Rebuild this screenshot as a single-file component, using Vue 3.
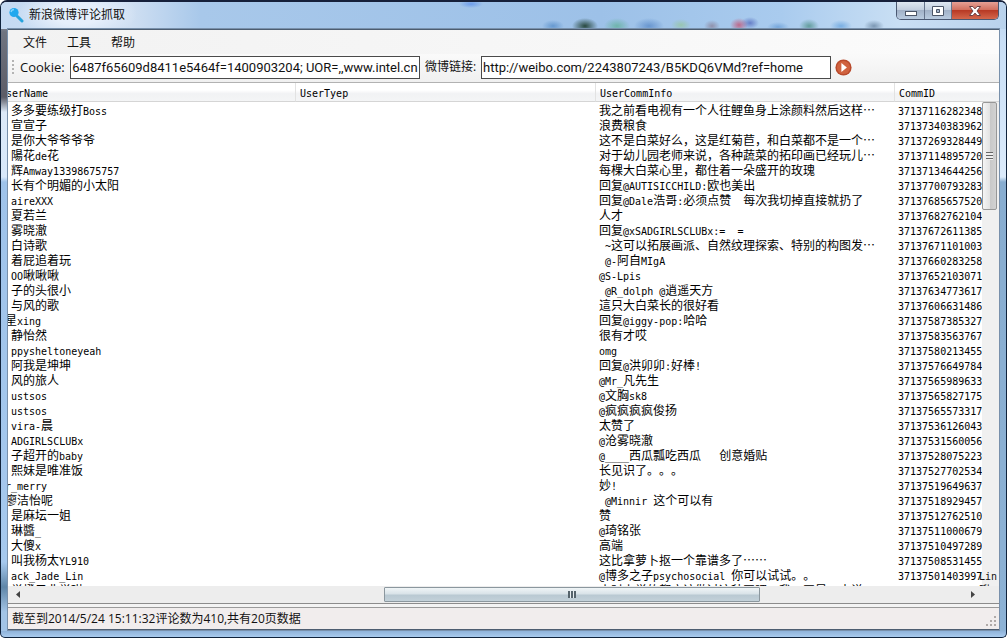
<script setup>
import { onMounted, ref } from 'vue'

const cookie = ref('b6487f65609d8411e5464f=1400903204; UOR=,,www.intel.cn')
const link = ref('http://weibo.com/2243807243/B5KDQ6VMd?ref=home')
const menus = ['文件', '工具', '帮助']

// The cookie box shows the end of its value, where the caret was left.
const cookieBox = ref(null)
onMounted(() => {
  cookieBox.value.scrollLeft = cookieBox.value.scrollWidth
})

const rows = [
  ['多多要练级打Boss', '我之前看电视有一个人往鲤鱼身上涂颜料然后这样…', '37137116282348'],
  ['宣宣子', '浪费粮食', '37137340383962'],
  ['是你大爷爷爷爷', '这不是白菜好么，这是红菊苣，和白菜都不是一个…', '37137269328449'],
  ['陽花de花', '对于幼儿园老师来说，各种蔬菜的拓印画已经玩儿…', '37137114895720'],
  ['辉Amway13398675757', '每棵大白菜心里，都住着一朵盛开的玫瑰', '37137134644256'],
  ['长有个明媚的小太阳', '回复@AUTISICCHILD:欧也美出', '37137700793283'],
  ['aireXXX', '回复@Dale浩哥:必须点赞　每次我切掉直接就扔了', '37137685657520'],
  ['夏若兰', '人才', '37137682762104'],
  ['雾晓澈', '回复@xSADGIRLSCLUBx:=  =', '37137672611385'],
  ['白诗歌', ' ~这可以拓展画派、自然纹理探索、特别的构图发…', '37137671101003'],
  ['着屁追着玩', ' @-阿自MIgA', '37137660283258'],
  ['OO啾啾啾', '@S-Lpis', '37137652103071'],
  ['子的头很小', ' @R_dolph @逍遥天方', '37137634773617'],
  ['与风的歌', '這只大白菜长的很好看', '37137606631486'],
  ['星xing', '回复@iggy-pop:哈哈', '37137587385327', true],
  ['静怡然', '很有才哎', '37137583563767'],
  ['ppysheltoneyeah', 'omg', '37137580213455'],
  ['阿我是坤坤', '回复@洪卯卯:好棒!', '37137576649784'],
  ['风的旅人', '@Mr_凡先生', '37137565989633'],
  ['ustsos', '@文胸sk8', '37137565827175'],
  ['ustsos', '@疯疯疯疯俊扬', '37137565573317'],
  ['vira-晨', '太赞了', '37137536126043'],
  ['ADGIRLSCLUBx', '@沧雾晓澈', '37137531560056'],
  ['子超开的baby', '@____西瓜瓢吃西瓜   创意婚贴', '37137528075223'],
  ['熙妹是唯准饭', '长见识了。。。', '37137527702534'],
  ['r_merry', '妙!', '37137519649637', true],
  ['廖洁怡呢', ' @Minnir 这个可以有', '37137518929457', true],
  ['是麻坛一姐', '赞', '37137512762510'],
  ['琳醬_', '@琦铭张', '37137511000679'],
  ['大傻x', '高端', '37137510497289'],
  ['叫我杨太YL910', '这比拿萝卜抠一个靠谱多了……', '37137508531455'],
  ['ack_Jade_Lin', '@博多之子psychosocial 你可以试试。。', '37137501403997'],
  ['学橙子非学琪', '小时上学的都应该做过这种画吧，我一画是一本说', '']
]

// Latin runs take half the advance of a Chinese glyph, so they are set apart.
const runs = (text) =>
  (text.match(/[\x20-\x7e]+|[^\x20-\x7e]+/g) || []).map((t) => ({ t, latin: /^[\x20-\x7e]/.test(t) }))
</script>

<template>
  <div class="window">
    <header class="titlebar">
      <svg class="app-icon" viewBox="0 0 16 16" aria-hidden="true">
        <path d="M9.5 9.5 14 14" stroke="#27a3dc" stroke-width="3" stroke-linecap="round" />
        <circle cx="6" cy="5.5" r="4.6" fill="#20a8ee" />
        <path d="M3 5a3.2 3.2 0 0 1 3-2.5" stroke="#7fd3fb" stroke-width="1.4" fill="none" />
      </svg>
      <h1>新浪微博评论抓取</h1>
      <div class="caption">
        <button type="button" class="min" aria-label="最小化">
          <svg viewBox="0 0 14 12"><rect x="1.5" y="6.5" width="11" height="4" fill="#fff" stroke="#4c5668" /></svg>
        </button>
        <button type="button" class="max" aria-label="最大化">
          <svg viewBox="0 0 14 12"><path fill-rule="evenodd" d="M1.5 1.5h11v9h-11zM5.5 4.5v3h3v-3z" fill="#fff" stroke="#4c5668" /></svg>
        </button>
        <button type="button" class="close" aria-label="关闭">
          <svg viewBox="0 0 14 12"><path d="M1.5 1.5h3.4L7 3.9l2.1-2.4h3.4L9 6l3.5 4.5H9.1L7 8.1l-2.1 2.4H1.5L5 6z" fill="#fff" stroke="#6b4044" /></svg>
        </button>
      </div>
    </header>

    <main class="client">
      <nav class="menubar">
        <button v-for="m in menus" :key="m" type="button">{{ m }}</button>
      </nav>

      <form class="toolbar" @submit.prevent>
        <span class="grip"></span>
        <label for="cookie">Cookie:</label>
        <input id="cookie" ref="cookieBox" v-model="cookie" type="text" />
        <label for="link">微博链接:</label>
        <input id="link" v-model="link" type="text" />
        <button type="submit" class="go" aria-label="开始">
          <svg viewBox="0 0 16 16">
            <circle cx="8" cy="8" r="7.6" fill="#b94a2c" />
            <circle cx="8" cy="8" r="6.2" fill="#d0623f" />
            <path d="M6 3.8 11.2 8 6 12.2z" fill="#fff" />
          </svg>
        </button>
      </form>

      <section class="list">
        <div class="viewport">
          <table>
            <colgroup><col class="c-name" /><col class="c-type" /><col class="c-info" /><col /></colgroup>
            <thead>
              <tr>
                <th class="cut"><span class="latin">serName</span></th>
                <th><span class="latin">UserTyep</span></th>
                <th><span class="latin">UserCommInfo</span></th>
                <th><span class="latin">CommID</span></th>
              </tr>
            </thead>
            <tbody>
              <tr v-for="(r, i) in rows" :key="i">
                <td :class="{ cut: r[3] }"><span v-for="(p, k) in runs(r[0])" :key="k" :class="{ latin: p.latin }">{{ p.t }}</span></td>
                <td></td>
                <td><span v-for="(p, k) in runs(r[1])" :key="k" :class="{ latin: p.latin }">{{ p.t }}</span></td>
                <td><span class="latin">{{ r[2] }}</span></td>
              </tr>
            </tbody>
          </table>
          <div class="vscroll"><div class="thumb"><i></i></div></div>
          <div class="spill"><span class="latin">Lin</span><br />啾</div>
        </div>
        <div class="hscroll">
          <svg viewBox="0 0 4 7"><path d="M4 0v7L0 3.5z" fill="#444" /></svg>
          <div class="track"><div class="thumb"><i></i></div></div>
          <svg viewBox="0 0 4 7"><path d="M0 0v7l4-3.5z" fill="#444" /></svg>
        </div>
      </section>

      <footer class="status">
        <span>截至到2014/5/24 15:11:32评论数为410,共有20页数据</span>
        <svg viewBox="0 0 11 11" aria-hidden="true">
          <path d="M8 0h2v2H8zM4 4h2v2H4zM8 4h2v2H8zM0 8h2v2H0zM4 8h2v2H4zM8 8h2v2H8z" fill="#b0aaa8" />
        </svg>
      </footer>
    </main>
  </div>
</template>

<style>
html, body, #app { height: 100%; margin: 0; }
</style>

<style scoped>
.window {
  box-sizing: border-box;
  height: 100%;
  display: flex;
  flex-direction: column;
  padding: 0 7px 7px;
  overflow: hidden;
  border: 1px solid #10233c;
  border-top: 2px solid #16203a;
  border-radius: 7px 7px 5px 5px;
  background:
    linear-gradient(#8fb3da, #a9cbee) 0 100% / 100% 6px no-repeat,
    linear-gradient(#c9d6e8 0, #6f7480 30px, #5c5c66 95px, #dce9f8 110px, #d8e8fa 175px, #9fc3ea 180px, #a6c9ee 560px, #5f86a8 585px, #a3c4e6 610px) 0 0 / 8px 100% no-repeat,
    linear-gradient(#b9d2ee 0, #c9dff6 40px, #dcebfb 175px, #88add0 180px, #8db2d5 100%) 100% 0 / 8px 100% no-repeat,
    #a9cbee;
  font: 12px/16px "Open Sans", "Noto Sans CJK SC", sans-serif;
  color: #111;
}
button { font: inherit; color: inherit; border: 0; background: none; padding: 0; }
svg { display: block; flex: none; }

.titlebar {
  flex: none;
  display: flex;
  align-items: flex-start;
  height: 27px;
  margin: 0 -7px;
  padding-left: 7px;
  background:
    radial-gradient(60px 26px at 76px 12px, #e6effb 40%, transparent 100%),
    radial-gradient(11px 6px at 552px 24px, #4d86c4b0, transparent),
    radial-gradient(13px 8px at 584px 24px, #28483f, transparent),
    radial-gradient(13px 8px at 616px 24px, #5fb096c0, transparent),
    radial-gradient(15px 8px at 648px 24px, #5687c6c0, transparent),
    radial-gradient(10px 6px at 680px 23px, #94c696b0, transparent),
    radial-gradient(8px 6px at 711px 24px, #87798eb0, transparent),
    radial-gradient(9px 7px at 738px 23px, #c4496ac0, transparent),
    radial-gradient(9px 6px at 749px 21px, #5167bbc0, transparent),
    radial-gradient(11px 5px at 777px 25px, #6098d4b0, transparent),
    radial-gradient(10px 7px at 808px 24px, #498c82c0, transparent),
    radial-gradient(11px 6px at 840px 24px, #5c9ddcb0, transparent),
    radial-gradient(10px 6px at 873px 24px, #5b7896b0, transparent),
    radial-gradient(12px 4px at 470px 2px, #6c9ceb, transparent),
    linear-gradient(90deg, #c5daf2 0, #cfdff2 130px, #a8c8ea 200px, #9dc1e8 600px, #a9cbee 780px, #c9dff4 900px, #b9d2ec 100%);
}
.app-icon { width: 16px; height: 16px; margin-top: 5px; }
h1 { flex: 1; margin: 5px 0 0 5px; font-size: 12px; line-height: 16px; font-weight: 400; }
.caption {
  display: flex;
  height: 17px;
  margin-right: 7px;
  border: 1px solid #4a5872;
  border-top: 0;
  border-radius: 0 0 5px 5px;
  overflow: hidden;
}
.caption button { display: flex; align-items: center; justify-content: center; width: 27px; background: linear-gradient(#dfe8f2, #c3cfdf 45%, #a2b2c8 50%, #b9cbe0); }
.caption button + button { border-left: 1px solid #66748c; }
.caption .close { width: 47px; background: linear-gradient(#e5a095, #d2705f 45%, #b83a25 50%, #d4674c); }
.caption svg { width: 14px; height: 12px; }

.client {
  flex: 1;
  min-height: 0;
  display: flex;
  flex-direction: column;
  border: 1px solid #4d5d70;
  border-width: 1px 0;
  box-shadow: 0 0 0 1px #7890ab;
  background: #f3f3f3;
}
.menubar { display: flex; gap: 20px; padding: 5px 15px 3px; background: linear-gradient(90deg, #f2f2f2, #f7f7f7 60%, #fcfcfc); }
.menubar button { width: 24px; line-height: 16px; }

.toolbar {
  box-sizing: border-box;
  display: flex;
  align-items: center;
  height: 29px;
  padding: 0 4px 2px;
  border-bottom: 1px solid #b2b2b2;
  background: linear-gradient(#fafafa, #f0f0f0);
}
.grip { width: 2px; height: 15px; margin-right: 6px; background: repeating-linear-gradient(#b4b4b4 0 2px, transparent 2px 4px); }
.toolbar label { line-height: 20px; white-space: nowrap; }
.toolbar label:first-of-type { width: 46px; margin-right: 4px; font-size: 13px; }
.toolbar label:last-of-type { width: 57px; padding-left: 5px; box-sizing: border-box; margin-right: 4px; }
.toolbar input {
  box-sizing: border-box;
  width: 350px;
  height: 23px;
  padding: 0 1px;
  border: 1px solid #4a4a4a;
  background: #fff;
  color: #111;
  font: 13px/20px Roboto, "Noto Sans CJK SC", sans-serif;
}
.go { margin-left: 4px; }
.go svg { width: 17px; height: 17px; }

.list { flex: 1; min-height: 0; display: flex; flex-direction: column; background: #fff; border-bottom: 1px solid #8c8c8c; }
.viewport { position: relative; flex: 1; min-height: 0; overflow: hidden; }
table { width: 100%; table-layout: fixed; border-collapse: separate; border-spacing: 0; font: 12px/15px "Noto Sans CJK SC", sans-serif; color: #000; text-spacing-trim: space-all; }
.c-name { width: 288px; }
.c-type { width: 300px; }
.c-info { width: 299px; }
th { height: 18px; padding: 0 4px; text-align: left; font-weight: 400; line-height: 18px; border-right: 1px solid #e2e2e2; border-bottom: 1px solid #d5d5d5; background: linear-gradient(#fff 40%, #f1f2f4 60%, #f4f5f6); overflow: hidden; }
th:last-child { border-right: 0; }
td { height: 15px; padding: 0 3px; white-space: pre; }
td:last-child { padding-right: 17px; }
.cut { text-indent: -6px; }
.latin { font-family: "DejaVu Sans Mono", monospace; font-size: 10px; line-height: 10px; }

.vscroll { position: absolute; top: 19px; right: 0; bottom: 0; width: 17px; background: #f0f0f0; }
.vscroll .thumb { display: flex; align-items: center; justify-content: center; box-sizing: border-box; width: 15px; height: 108px; border: 1px solid #979797; border-radius: 2px; background: linear-gradient(90deg, #f5f5f5, #e4e4e4 50%, #c8c8c8 55%, #d2d2d2); }
.vscroll i { width: 7px; height: 8px; background: repeating-linear-gradient(#666 0 1px, #eee 1px 3px); }
.spill { position: absolute; right: 0; bottom: -11px; width: 20px; height: 30px; font: 12px/15px "Noto Sans CJK SC", sans-serif; overflow: hidden; white-space: nowrap; }

.hscroll { flex: none; display: flex; align-items: center; height: 17px; padding: 0 24px 0 8px; background: #ededed; }
.hscroll svg { width: 4px; height: 7px; }
.track { flex: 1; display: flex; height: 15px; }
.hscroll .thumb { display: flex; align-items: center; justify-content: center; box-sizing: border-box; width: 39.5%; margin-left: 38.3%; border: 1px solid #8b979e; border-radius: 1px; background: linear-gradient(#f0f5f7, #d9e3e8 45%, #b9c9d2 55%, #c3d1d9); }
.hscroll i { width: 8px; height: 7px; background: repeating-linear-gradient(90deg, #56646c 0 2px, #e8eef1 2px 3px); }

.status { flex: none; display: flex; align-items: flex-end; justify-content: space-between; height: 21px; margin-top: 3px; padding: 0 2px 0 4px; border-top: 1px solid #9a9a9a; background: #f1eded; }
.status span { align-self: center; white-space: nowrap; }
.status svg { width: 11px; height: 11px; margin-bottom: 2px; }
</style>
